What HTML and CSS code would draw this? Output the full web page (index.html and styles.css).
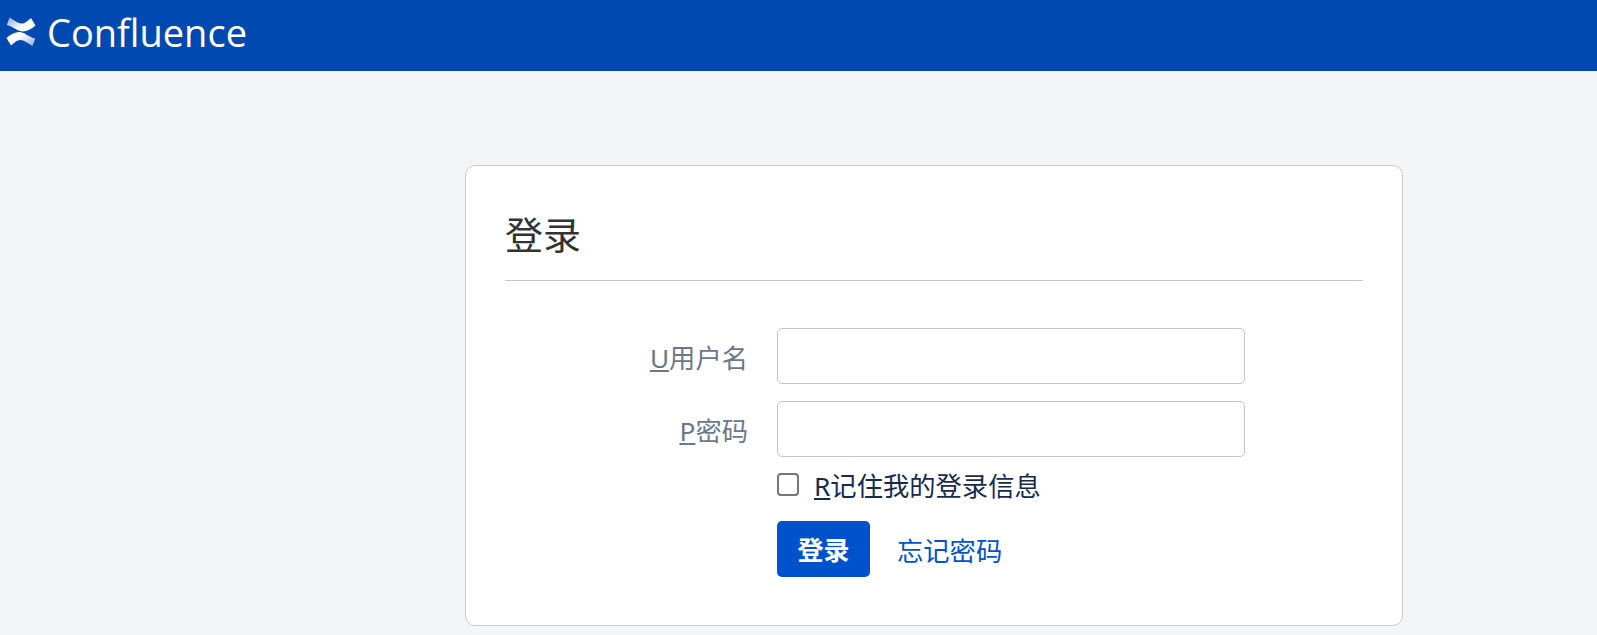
FILE: index.html
```html
<!DOCTYPE html>
<html lang="zh-CN">
<head>
    <meta charset="UTF-8">
    <title>登录 - Confluence</title>
    <link rel="stylesheet" href="styles.css">
</head>
<body>

    <header class="top-bar">
        <a href="#" class="logo">
            <svg class="logo-mark" viewBox="0 0 30 30" width="30" height="30" aria-hidden="true">
                <defs>
                    <linearGradient id="markTop" x1="0" y1="0" x2="1" y2="0.6">
                        <stop offset="0" stop-color="#8fadde"/>
                        <stop offset="0.7" stop-color="#ffffff"/>
                    </linearGradient>
                    <linearGradient id="markBottom" x1="1" y1="1" x2="0" y2="0.4">
                        <stop offset="0" stop-color="#8fadde"/>
                        <stop offset="0.7" stop-color="#ffffff"/>
                    </linearGradient>
                </defs>
                <path fill="url(#markTop)" d="M3.5 0.5 L0.8 8 C7 9.5 10.5 13.5 15 14.3 C20 15 25 12.5 29.5 8.5 L25 1 C22 3.5 18.5 6.8 15.5 6.5 C11 6 7 2.5 3.5 0.5 Z"/>
                <path fill="url(#markBottom)" d="M15 15.2 C10 14.5 5 17 0.5 21 L5 28.5 C8 26 11.5 22.7 14.5 23 C19 23.5 23 27 26.5 29 L29.2 21.5 C23 20 19.5 16 15 15.2 Z"/>
            </svg>
            <span class="logo-text">Confluence</span>
        </a>
    </header>

    <main class="page">
        <section class="login-card">
            <h1>登录</h1>
            <form class="login-form">
                <div class="field">
                    <label for="username"><u>U</u>用户名</label>
                    <input id="username" type="text">
                </div>
                <div class="field">
                    <label for="password"><u>P</u>密码</label>
                    <input id="password" type="password">
                </div>
                <div class="remember">
                    <input id="remember" type="checkbox">
                    <label for="remember"><u>R</u>记住我的登录信息</label>
                </div>
                <div class="actions">
                    <button type="button" class="btn">登录</button>
                    <a href="#" class="forgot">忘记密码</a>
                </div>
            </form>
        </section>
    </main>

</body>
</html>
```

FILE: styles.css
```css
* {
    box-sizing: border-box;
}

body {
    font-family: "Noto Sans", "Noto Sans CJK SC", sans-serif;
    font-size: 26.3px;
    background-color: #f4f5f7;
    color: #172b4d;
    margin: 0;
    padding: 0;
}

.top-bar {
    height: 71px;
    background-color: #0049b0;
    display: flex;
    align-items: center;
    padding: 0 0 7px 6px;
}

.logo {
    display: flex;
    align-items: center;
    gap: 11px;
    color: white;
    text-decoration: none;
}

.logo-text {
    font-family: "Open Sans", sans-serif;
    font-size: 38px;
    line-height: 40px;
}

.page {
    padding: 94px 194px 0 465px;
}

.login-card {
    height: 461px;
    padding: 39px;
    background-color: white;
    border: 1px solid #c9cdd3;
    border-radius: 10px;
}

h1 {
    margin: 0;
    height: 76px;
    font-size: 38px;
    font-weight: 400;
    line-height: 58px;
    color: #333;
    border-bottom: 1px solid #c1c7d0;
}

.login-form {
    padding-top: 47px;
}

.field {
    display: flex;
    align-items: center;
    gap: 29px;
    margin-bottom: 12px;
}

.field + .field {
    margin-top: 17px;
}

.field label {
    width: 243px;
    text-align: right;
    color: #6b778c;
}

.field input {
    width: 468px;
    height: 56px;
    border: 1px solid #c1c7d0;
    border-radius: 5px;
    background-color: white;
}

.remember {
    display: flex;
    align-items: center;
    gap: 15px;
    margin-left: 272px;
    height: 31px;
}

.remember input {
    appearance: none;
    width: 22px;
    height: 23px;
    margin: 0;
    border: 2px solid #767676;
    border-radius: 4px;
    background-color: white;
}

.actions {
    display: flex;
    align-items: center;
    gap: 27px;
    margin-left: 272px;
    margin-top: 21px;
}

.btn {
    width: 93px;
    height: 56px;
    font-family: inherit;
    font-size: 26px;
    font-weight: 700;
    color: white;
    background-color: #0052cc;
    border: none;
    border-radius: 5px;
}

.forgot {
    color: #0052cc;
    text-decoration: none;
}
```
